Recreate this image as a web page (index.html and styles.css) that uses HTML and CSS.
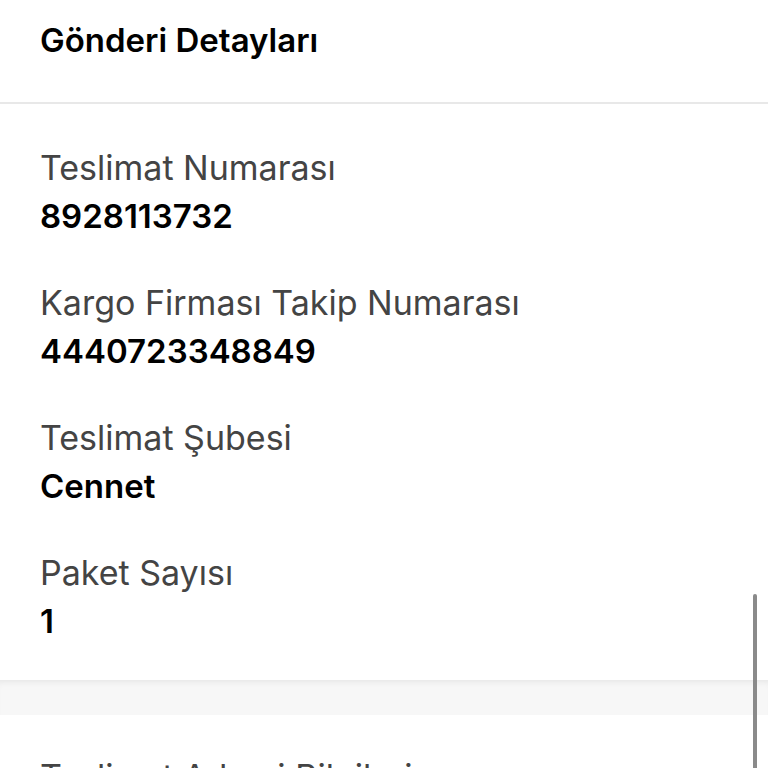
FILE: index.html
```html
<!DOCTYPE html>
<html lang="tr">
<head>
    <meta charset="UTF-8">
    <meta name="viewport" content="width=device-width, initial-scale=1.0">
    <title>Gönderi Detayları</title>
    <link rel="stylesheet" href="styles.css">
</head>
<body>
    <div class="page">
        <!-- Gönderi kartı -->
        <section class="card">
            <h1 class="card-title">Gönderi Detayları</h1>
            <div class="details">
                <div class="detail">
                    <span class="label">Teslimat Numarası</span>
                    <span class="value">8928113732</span>
                </div>
                <div class="detail">
                    <span class="label">Kargo Firması Takip Numarası</span>
                    <span class="value">4440723348849</span>
                </div>
                <div class="detail">
                    <span class="label">Teslimat Şubesi</span>
                    <span class="value">Cennet</span>
                </div>
                <div class="detail">
                    <span class="label">Paket Sayısı</span>
                    <span class="value">1</span>
                </div>
            </div>
        </section>

        <div class="gap"></div>

        <!-- Sonraki kart, ekranın altında kalıyor -->
        <section class="card next">
            <div class="details">
                <div class="detail">
                    <span class="label">Teslimat Adresi Bilgileri</span>
                </div>
            </div>
        </section>
    </div>

    <div class="scrollbar"></div>
</body>
</html>
```

FILE: styles.css
```css
body {
    margin: 0;
    font-family: Inter, "Noto Sans", sans-serif;
    background: #fff;
    color: #000;
    overflow: hidden;
}

.page {
    display: flex;
    flex-direction: column;
}

.card {
    background: #fff;
}

.card-title {
    margin: 0;
    padding: 20px 40px 42px;
    font-size: 33px;
    font-weight: 600;
    line-height: 40px;
    border-bottom: 2px solid #e8e8e8;
}

.details {
    display: flex;
    flex-direction: column;
    gap: 41px;
    padding: 42px 40px 35px;
}

.detail {
    display: flex;
    flex-direction: column;
    gap: 2px;
}

.label {
    font-size: 34px;
    line-height: 44px;
    color: #444;
}

.value {
    font-size: 33px;
    line-height: 48px;
    font-weight: 600;
    color: #000;
}

.gap {
    height: 35px;
    background: #f7f7f7;
    box-shadow: inset 0 6px 6px -4px rgba(0, 0, 0, 0.07);
}

.next .details {
    padding-top: 40px;
}

.scrollbar {
    position: fixed;
    right: 11px;
    top: 594px;
    width: 4px;
    height: 200px;
    border-radius: 2px;
    background: #8a8a8a;
}
```
